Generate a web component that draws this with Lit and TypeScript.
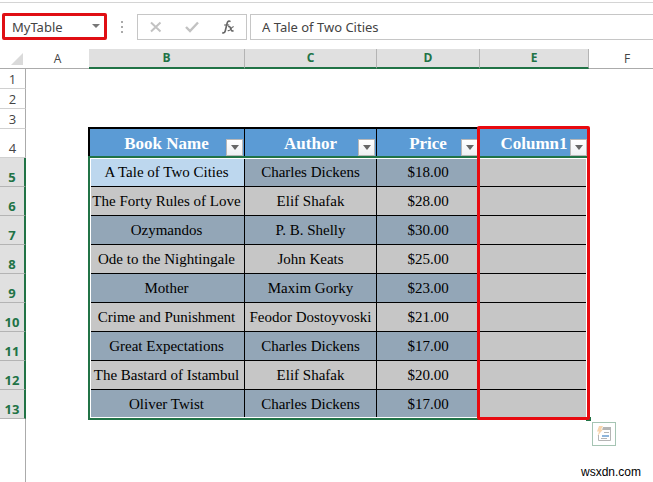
import { LitElement, html, css, svg } from "lit";
import { customElement, property } from "lit/decorators.js";

const BOOKS: [string, string, string][] = [
  ["A Tale of Two Cities", "Charles Dickens", "$18.00"],
  ["The Forty Rules of Love", "Elif Shafak", "$28.00"],
  ["Ozymandos", "P. B. Shelly", "$30.00"],
  ["Ode to the Nightingale", "John Keats", "$25.00"],
  ["Mother", "Maxim Gorky", "$23.00"],
  ["Crime and Punishment", "Feodor Dostoyvoski", "$21.00"],
  ["Great Expectations", "Charles Dickens", "$17.00"],
  ["The Bastard of Istambul", "Elif Shafak", "$20.00"],
  ["Oliver Twist", "Charles Dickens", "$17.00"],
];

const HEADINGS = ["Book Name", "Author", "Price", "Column1"];

@customElement("formula-bar")
export class FormulaBar extends LitElement {
  @property() name = "";
  @property() value = "";

  static styles = css`
    :host {
      display: flex;
      align-items: center;
      box-sizing: border-box;
      height: 49px;
      padding: 9px 0 7px 2px;
      border-top: 2px solid #fff;
      box-shadow: inset 0 1px #d4d4d4;
      font: 13px/20px "Noto Sans", "Open Sans", sans-serif;
      color: #444;
    }
    .name {
      display: flex;
      align-items: center;
      box-sizing: border-box;
      width: 105px;
      height: 27px;
      border: 3px solid #e00f14;
      border-radius: 2px;
      padding: 0 4px 0 7px;
    }
    input {
      min-width: 0;
      flex: 1;
      border: 0;
      padding: 0;
      background: none;
      outline: none;
      font: inherit;
      color: inherit;
    }
    button {
      border: 0;
      padding: 0;
      background: none;
      display: flex;
    }
    .grip {
      width: 30px;
      display: flex;
      justify-content: center;
    }
    .actions {
      display: flex;
      align-items: center;
      justify-content: space-between;
      box-sizing: border-box;
      width: 110px;
      height: 26px;
      border: 1px solid #c6c6c6;
      padding: 0 11px;
    }
    .value {
      display: flex;
      align-items: center;
      box-sizing: border-box;
      flex: 1;
      height: 26px;
      margin-left: 3px;
      border: 1px solid #c6c6c6;
      border-right: 0;
      padding-left: 11px;
    }
  `;

  render() {
    return html`
      <div class="name">
        <input aria-label="Name box" .value=${this.name} />
        <button aria-label="Show names">
          <svg width="8" height="10" viewBox="0 0 8 10"><path d="M0 2h8L4 6z" fill="#777" /></svg>
        </button>
      </div>
      <div class="grip">
        <svg width="2" height="12" viewBox="0 0 2 12"><path d="M0 0h2v2H0zM0 5h2v2H0zM0 10h2v2H0z" fill="#aaa" /></svg>
      </div>
      <div class="actions">
        <button aria-label="Cancel">
          <svg width="14" height="12" viewBox="0 0 14 12">
            <path d="M2 1.5l9.5 9M11.5 1.5L2 10.5" stroke="#c2c2c2" stroke-width="2" fill="none" />
          </svg>
        </button>
        <button aria-label="Enter">
          <svg width="14" height="12" viewBox="0 0 14 12">
            <path d="M1 6l4 4L13 1.500" stroke="#c2c2c2" stroke-width="2.400" fill="none" />
          </svg>
        </button>
        <button aria-label="Insert function">
          <svg width="14" height="14" viewBox="0 0 14 14" fill="none" stroke="#666">
            <path d="M9.500 1.600C7.800.4 6.600 1.200 6.100 3.300L4.300 10.800C3.900 12.600 2.700 13.400 1.300 12.500" stroke-width="1.600" />
            <path d="M3.200 5h5" stroke-width="1.200" />
            <path d="M7.200 6.800c1.500-.8 2 .3 2.600 2.200s1.200 2.400 2.700 1.500" stroke-width="1.500" />
            <path d="M12.800 6.800c-1.500-.4-2.200 1-3.200 2.400s-1.700 1.800-2.900 1.300" stroke-width="1.100" />
          </svg>
        </button>
      </div>
      <div class="value"><input aria-label="Formula bar" .value=${this.value} /></div>
    `;
  }
}

@customElement("sheet-grid")
export class SheetGrid extends LitElement {
  static styles = css`
    :host {
      display: flex;
      flex-direction: column;
      position: relative;
      flex: 1;
    }
    table {
      width: calc(100% + 12px);
      table-layout: fixed;
      border-collapse: separate;
      border-spacing: 0;
      font: 15px/20px "Liberation Serif", serif;
      color: #000;
    }
    th,
    td {
      box-sizing: border-box;
      padding: 0;
      text-align: center;
      vertical-align: middle;
      white-space: nowrap;
    }
    .gutter { width: 26px; }
    .a { width: 63px; }
    .b { width: 156px; }
    .c { width: 132px; }
    .d { width: 103px; }
    .e { width: 109px; }
    thead th {
      height: 20px;
      border-bottom: 1px solid #ababab;
      font: 12px/18px "Open Sans", "Noto Sans", sans-serif;
      color: #444;
    }
    thead .active {
      background: #e0e0e0;
      border-right: 1px solid #b4b4b4;
      border-bottom: 2px solid #217346;
      font-weight: 700;
      color: #217346;
    }
    .corner { vertical-align: bottom; text-align: right; }
    .corner svg { display: block; margin: 0 3px 3px auto; }
    tbody tr { height: 29px; }
    tbody tr.blank { height: 20px; }
    tbody .num {
      border-right: 1px solid #ababab;
      border-bottom: 1px solid #d0d0d0;
      vertical-align: bottom;
      font: 13px/18px "Open Sans", "Noto Sans", sans-serif;
      color: #444;
    }
    tbody .num.active {
      background: #e0e0e0;
      border-right: 2px solid #217346;
      border-bottom-color: #b4b4b4;
      font-weight: 700;
      color: #217346;
    }
    .rest td { height: 63px; }
    .rest .gutter { border-right: 1px solid #ababab; }
    .head {
      background: #5b9bd5;
      color: #fff;
      border-right: 1px solid #000;
      font: bold 17px/20px "Liberation Serif", serif;
    }
    .head .wrap {
      display: flex;
      align-items: flex-end;
      height: 29px;
    }
    .head .label { flex: 1; padding-bottom: 4px; }
    .filter {
      display: flex;
      align-items: center;
      justify-content: center;
      box-sizing: border-box;
      width: 17px;
      height: 17px;
      flex: none;
      margin: 0 1px 2px -18px;
      padding: 0;
      border: 1px solid #b8b8b8;
      background: linear-gradient(#fff, #eef0f3);
    }
    .cell {
      border-right: 1px solid #000;
      border-bottom: 1px solid #000;
      background: #c6c6c6;
    }
    .band { background: #93a6b7; }
    .cell.last { background: #c6c6c6; }
    .current { background: #bdd7ee; }
    .outline,
    .selection,
    .callout,
    .handle,
    .quick {
      position: absolute;
      box-sizing: border-box;
    }
    .outline {
      left: 88px;
      top: 78px;
      width: 501px;
      height: 31px;
      border: 2px solid #000;
      border-width: 2px 0 0 2px;
    }
    .selection {
      left: 88px;
      top: 107px;
      width: 501px;
      height: 264px;
      border: 2px solid #217346;
      box-shadow: inset 0 0 0 1px #fff;
    }
    .callout {
      left: 477px;
      top: 77px;
      width: 113px;
      height: 294px;
      border: 3px solid #e80a10;
      border-radius: 2px;
    }
    .handle {
      left: 586px;
      top: 368px;
      width: 5px;
      height: 4px;
      background: #217346;
    }
    .quick {
      left: 592px;
      top: 373px;
      width: 24px;
      height: 24px;
      border: 1px solid #a5c4b3;
      padding: 0;
      background: #fff;
      display: flex;
      align-items: center;
      justify-content: center;
    }
  `;

  private columnHead(letter: string) {
    const active = "BCDE".includes(letter);
    return html`<th scope="col" class="${letter.toLowerCase()} ${active ? "active" : ""}">${letter}</th>`;
  }

  render() {
    return html`
      <table>
        <thead>
          <tr>
            <th class="gutter corner">
              <svg width="12" height="12" viewBox="0 0 12 12"><path d="M12 0v12H0z" fill="#dadada" /></svg>
            </th>
            ${["A", "B", "C", "D", "E", "F"].map((l) => this.columnHead(l))}
          </tr>
        </thead>
        <tbody>
          ${[1, 2, 3].map(
            (n) => html`<tr class="blank"><th scope="row" class="num">${n}</th><td colspan="6"></td></tr>`
          )}
          <tr>
            <th scope="row" class="num">4</th>
            <td></td>
            ${HEADINGS.map(
              (h) => html`<th scope="col" class="head">
                <div class="wrap">
                  <span class="label">${h}</span>
                  <button class="filter" aria-label="Filter ${h}">
                    <svg width="8" height="5" viewBox="0 0 8 5">${svg`<path d="M0 0h8L4 5z" fill="#666" />`}</svg>
                  </button>
                </div>
              </th>`
            )}
            <td></td>
          </tr>
          ${BOOKS.map(
            (row, i) => html`<tr>
              <th scope="row" class="num active">${i + 5}</th>
              <td></td>
              ${row.map(
                (text, c) => html`<td class="cell ${i === 0 && c === 0 ? "current" : i % 2 === 0 ? "band" : ""}">${text}</td>`
              )}
              <td class="cell last"></td>
              <td></td>
            </tr>`
          )}
          <tr class="rest"><td class="gutter"></td><td colspan="6"></td></tr>
        </tbody>
      </table>
      <div class="outline"></div>
      <div class="selection"></div>
      <div class="handle"></div>
      <div class="callout"></div>
      <button class="quick" aria-label="Quick analysis">
        <svg width="16" height="16" viewBox="0 0 16 16">
          <path d="M7 1.500h7.500v13h-12V9" fill="none" stroke="#b5b5b5" />
          <path d="M7 1h8v3H6z" fill="#b5b5b5" />
          <path d="M8 6.500h5M5 12.500h6" stroke="#b5b5b5" />
          <path d="M6 9h7v2H6z" fill="#8fb6dc" />
          <path d="M3 0h4L5 3.500h2L1.500 10 3 5.500H1z" fill="#f8d5ae" />
        </svg>
      </button>
    `;
  }
}

@customElement("app-root")
export class AppRoot extends LitElement {
  static styles = css`
    :host {
      display: flex;
      flex-direction: column;
      position: relative;
      min-height: 100vh;
      background: #fff;
      overflow: hidden;
    }
    .mark {
      position: absolute;
      right: 12px;
      bottom: 1px;
      font: 12px/18px "Liberation Sans", sans-serif;
      color: #000;
    }
  `;

  render() {
    return html`
      <formula-bar name="MyTable" value="A Tale of Two Cities"></formula-bar>
      <sheet-grid></sheet-grid>
      <span class="mark">wsxdn.com</span>
    `;
  }
}
